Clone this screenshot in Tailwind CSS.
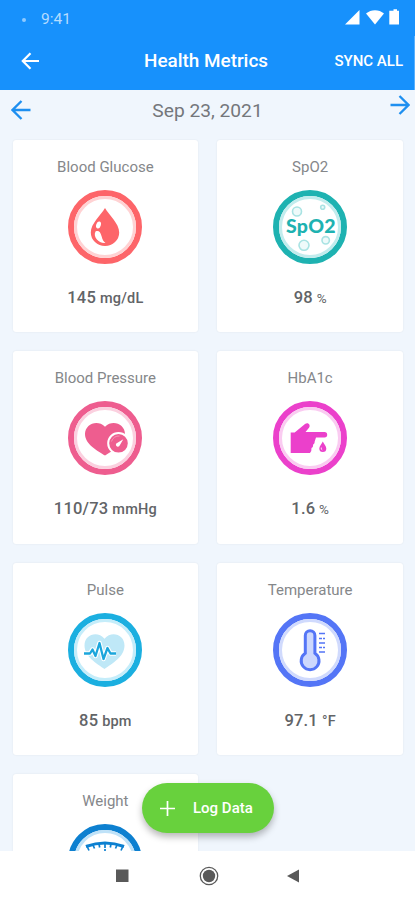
<!DOCTYPE html>
<html lang="en">
<head>
  <meta charset="UTF-8">
  <meta name="viewport" content="width=device-width, initial-scale=1.0">
  <title>Health Metrics</title>
  <script src="https://cdn.jsdelivr.net/npm/@tailwindcss/browser@4"></script>
</head>
<body class="relative w-[415px] h-[900px] overflow-hidden flex flex-col bg-[#f0f6fd] font-[Roboto,sans-serif]">

  <!-- Status bar -->
  <div class="h-9 shrink-0 bg-[#1791fc] flex items-center justify-between pl-[22px] pr-[15px] pt-1">
    <div class="flex items-center gap-[15px] text-[#b5dcff]">
      <span class="size-1 rounded-full bg-[#8fcaff]"></span>
      <span class="text-[15.500px] leading-none">9:41</span>
    </div>
    <svg class="w-[56px] h-[16px] -mt-[7px]" viewBox="0 0 56 16" fill="#fff">
      <path d="M1 15.500 15.500 1v14.500z"/>
      <path d="M22 4.500C27 0 35 0 40 4.500L31 15.500z"/>
      <path d="M47.500 1.800h2V.3h3.500v1.500h2v13.700H45.300V1.800z"/>
    </svg>
  </div>

  <!-- App bar -->
  <header class="h-[54px] shrink-0 bg-[#1791fc] border-r border-[#59b0fd] grid grid-cols-[123px_auto_1fr] items-center pl-[21px] pr-[11px] pb-[4px] text-white">
    <svg class="w-[19px] h-[18px]" viewBox="0 0 19 18" fill="none" stroke="#fff" stroke-width="2.200"><path d="M18 9H2M9.500 1.200 1.800 9l7.700 7.800"/></svg>
    <h1 class="text-[18.900px] font-medium whitespace-nowrap">Health Metrics</h1>
    <span class="text-[15px] font-medium text-right">SYNC ALL</span>
  </header>

  <!-- Date picker row -->
  <div class="h-[49px] shrink-0 flex items-start justify-between pl-[11px] pr-[5px]">
    <svg class="w-5 h-5 mt-[10px]" viewBox="0 0 20 20" fill="none" stroke="#1e8ff0" stroke-width="2.300"><path d="M19.500 10H1.500M10.500 1 1.500 10l9 9"/></svg>
    <span class="text-[19.200px] leading-6 mt-[9px] mr-[6px] text-[#74777b]">Sep 23, 2021</span>
    <svg class="w-5 h-5 mt-[5px]" viewBox="0 0 20 20" fill="none" stroke="#1e8ff0" stroke-width="2.300"><path d="M.5 10h18M9.500 1l9 9-9 9"/></svg>
  </div>

  <!-- Metric cards -->
  <main class="h-[712px] shrink-0 overflow-hidden grid grid-cols-2 auto-rows-[192.400px] gap-x-[19px] gap-y-[19px] content-start pl-[12.500px] pr-3 pt-px text-[15px] text-[#85878a]">

    <section class="bg-white rounded-[3px] shadow-[0_0_2px_rgba(0,0,0,0.08)] flex flex-col items-center pt-[17px]">
      <h2 class="leading-5">Blood Glucose</h2>
      <svg class="size-[74px] mt-[13px]" viewBox="0 0 74 74">
        <circle cx="37" cy="37" r="34" fill="#fff" stroke="#fd6569" stroke-width="6"/>
        <circle cx="37" cy="37" r="29.500" fill="none" stroke="#ffd2d3" stroke-width="3"/>
        <path d="M37 18c4 7 14.200 15.500 14.200 24.500a14.200 13.500 0 0 1-28.400 0C22.800 33.500 33 25 37 18z" fill="#fd6569"/>
        <ellipse cx="30.500" cy="35" rx="2.300" ry="3.600" transform="rotate(18 30.500 35)" fill="#fff"/>
        <path d="M27.500 41.500c3-1.500 5 .5 6 4.500s2.500 6 4 7c-6 1-13-6-10-11.500z" fill="#fff"/>
      </svg>
      <p class="leading-5 mt-6 text-[#626467] font-medium tracking-[0.2px]"><span class="text-[16.500px]">145</span> <span class="text-[14.500px]">mg/dL</span></p>
    </section>

    <section class="bg-white rounded-[3px] shadow-[0_0_2px_rgba(0,0,0,0.08)] flex flex-col items-center pt-[17px]">
      <h2 class="leading-5">SpO2</h2>
      <svg class="size-[74px] mt-[13px]" viewBox="0 0 74 74">
        <circle cx="37" cy="37" r="34" fill="#fff" stroke="#1eb2b1" stroke-width="6"/>
        <circle cx="37" cy="37" r="29.500" fill="none" stroke="#c2eced" stroke-width="3"/>
        <g fill="#eefafa" stroke="#a9e3e3" stroke-width="1.600">
          <circle cx="24" cy="21.500" r="4.500"/>
          <circle cx="49.700" cy="17.300" r="2"/>
          <circle cx="31" cy="55.300" r="5"/>
          <circle cx="52.700" cy="50.300" r="3.700"/>
        </g>
        <text x="13" y="43" textLength="49.500" font-family="Lato, sans-serif" font-weight="900" font-size="19.500" fill="#1eb2b1">SpO2</text>
      </svg>
      <p class="leading-5 mt-6 text-[#626467]"><span class="text-[16.500px] font-medium tracking-[0.2px]">98</span> <span class="text-[13.500px]">%</span></p>
    </section>

    <section class="bg-white rounded-[3px] shadow-[0_0_2px_rgba(0,0,0,0.08)] flex flex-col items-center pt-[17px]">
      <h2 class="leading-5">Blood Pressure</h2>
      <svg class="size-[74px] mt-[13px]" viewBox="0 0 74 74">
        <circle cx="37" cy="37" r="34" fill="#fff" stroke="#ee5d8f" stroke-width="6"/>
        <circle cx="37" cy="37" r="29.500" fill="none" stroke="#fbd0df" stroke-width="3"/>
        <path d="M37 54.500C30 50 17 43.500 17 33c0-9.500 12-15 20-7.300C45 18 57 23.500 57 33c0 10.500-13 17-20 21.500z" fill="#ee5d8f"/>
        <circle cx="50.500" cy="42.300" r="10.300" fill="#ee5d8f" stroke="#fff" stroke-width="2"/>
        <path d="M55.300 38.200 51.800 44.300a2 2 0 1 1-2.300-2.500z" fill="#fff"/>
        <path d="M43.500 40.500a7.500 7.500 0 0 1 8-5.500" fill="none" stroke="#f695b7" stroke-width="1"/>
      </svg>
      <p class="leading-5 mt-6 text-[#626467] font-medium tracking-[0.2px]"><span class="text-[16.500px]">110/73</span> <span class="text-[14.500px]">mmHg</span></p>
    </section>

    <section class="bg-white rounded-[3px] shadow-[0_0_2px_rgba(0,0,0,0.08)] flex flex-col items-center pt-[17px]">
      <h2 class="leading-5">HbA1c</h2>
      <svg class="size-[74px] mt-[13px]" viewBox="0 0 74 74">
        <circle cx="37" cy="37" r="34" fill="#fff" stroke="#eb40cb" stroke-width="6"/>
        <circle cx="37" cy="37" r="29.500" fill="none" stroke="#facbf1" stroke-width="3"/>
        <path d="M17.700 31.500h4L32 23c3-2.300 6 1 4 3.700L32.500 31h19a2.700 2.700 0 0 1 0 5.400H43l-1.300 4.100q.3 2-1.500 3 .2 2.500-1.700 3.500.3 3-1.500 5H17.700z" fill="#eb40cb"/>
        <path d="M49.800 40.500c1 2.500 3.500 4.500 3.500 7a3.500 3.500 0 0 1-7 0c0-2.500 2.500-4.500 3.500-7z" fill="#eb40cb"/>
        <path d="M48.300 46.500q-.5 2 1 2.500" fill="none" stroke="#fff" stroke-width=".8"/>
      </svg>
      <p class="leading-5 mt-6 text-[#626467]"><span class="text-[16.500px] font-medium tracking-[0.2px]">1.6</span> <span class="text-[13.500px]">%</span></p>
    </section>

    <section class="bg-white rounded-[3px] shadow-[0_0_2px_rgba(0,0,0,0.08)] flex flex-col items-center pt-[17px]">
      <h2 class="leading-5">Pulse</h2>
      <svg class="size-[74px] mt-[13px]" viewBox="0 0 74 74">
        <circle cx="37" cy="37" r="34" fill="#fff" stroke="#1bafe0" stroke-width="6"/>
        <circle cx="37" cy="37" r="29.500" fill="none" stroke="#c5edfa" stroke-width="3"/>
        <path d="M36.500 56C29 50.500 16.500 44 16.500 32.500c0-11 13-15 20-6.700 7-8.300 20-4.300 20 6.700C56.500 44 44 50.500 36.500 56z" fill="#bfe8f7"/>
        <g fill="none" stroke-linejoin="round">
          <path d="M16 40.500h6l2.500-4 3 6.500 4-13 4 16 4-11 3 5.500h5.500" stroke="#fff" stroke-width="4.500"/>
          <path d="M16 40.500h6l2.500-4 3 6.500 4-13 4 16 4-11 3 5.500h5.500" stroke="#1ba6dc" stroke-width="2.300"/>
        </g>
      </svg>
      <p class="leading-5 mt-6 text-[#626467] font-medium tracking-[0.2px]"><span class="text-[16.500px]">85</span> <span class="text-[14.500px]">bpm</span></p>
    </section>

    <section class="bg-white rounded-[3px] shadow-[0_0_2px_rgba(0,0,0,0.08)] flex flex-col items-center pt-[17px]">
      <h2 class="leading-5">Temperature</h2>
      <svg class="size-[74px] mt-[13px]" viewBox="0 0 74 74">
        <circle cx="37" cy="37" r="34" fill="#fff" stroke="#5475f6" stroke-width="6"/>
        <circle cx="37" cy="37" r="29.500" fill="none" stroke="#d0dafd" stroke-width="3"/>
        <path d="M32.300 40.300V22.500a4.800 4.800 0 0 1 9.600 0v17.800a8.900 8.900 0 1 1-9.600 0z" fill="#cdd8fd" stroke="#5475f6" stroke-width="3"/>
        <path d="M46 20.500h6M46 25.500h3M50 25.500h2M46 30h6M46 34.500h3M50 34.500h2M46 39h6" stroke="#5475f6" stroke-width="1.600"/>
      </svg>
      <p class="leading-5 mt-6 text-[#626467] font-medium tracking-[0.2px]"><span class="text-[16.500px]">97.1</span> <span class="text-[14.500px]">°F</span></p>
    </section>

    <section class="bg-white rounded-[3px] shadow-[0_0_2px_rgba(0,0,0,0.08)] flex flex-col items-center pt-[17px]">
      <h2 class="leading-5">Weight</h2>
      <svg class="size-[74px] mt-[13px]" viewBox="0 0 74 74">
        <circle cx="37" cy="37" r="34" fill="#fff" stroke="#0d80d0" stroke-width="6"/>
        <circle cx="37" cy="37" r="29.500" fill="none" stroke="#bfe2f8" stroke-width="3"/>
        <path d="M18 22.500Q37 15.500 56 22.500" fill="none" stroke="#0d80d0" stroke-width="3"/>
        <path d="M18.500 21l2.500 5.500M25 21l1.500 3.500M31 20l.7 3.500M37 19v5M43 20l-.7 3.500M49 21l-1.500 3.500M55.500 21l-2.500 5.500M37 25v9" stroke="#0d80d0" stroke-width="1.700"/>
      </svg>
    </section>
  </main>

  <!-- Floating action button -->
  <button class="absolute left-[142px] top-[783px] w-[132px] h-[50px] rounded-full bg-[#68d13d] shadow-[0_4px_7px_rgba(0,0,0,0.28)] flex items-center pl-[18px] gap-[18px] text-white text-[15px] font-medium">
    <svg class="size-[15px]" viewBox="0 0 15 15" stroke="#fff" stroke-width="1.700"><path d="M7.500 0v15M0 7.500h15"/></svg>
    <span class="whitespace-nowrap">Log Data</span>
  </button>

  <!-- Android navigation -->
  <nav class="h-[49px] shrink-0 bg-white flex items-center pl-[115.500px] gap-[70px]">
    <svg class="w-[13px] h-5" viewBox="0 0 13 20"><path d="M0 3.500h12.500V16H0z" fill="#595959"/></svg>
    <svg class="size-5" viewBox="0 0 20 20"><circle cx="10" cy="10" r="8.700" fill="none" stroke="#595959" stroke-width="1.300"/><circle cx="10" cy="10" r="6.200" fill="#595959"/></svg>
    <svg class="w-3 h-5 -ml-[2px]" viewBox="0 0 12 20"><path d="M12 3.500v13L0 10z" fill="#595959"/></svg>
  </nav>
</body>
</html>
